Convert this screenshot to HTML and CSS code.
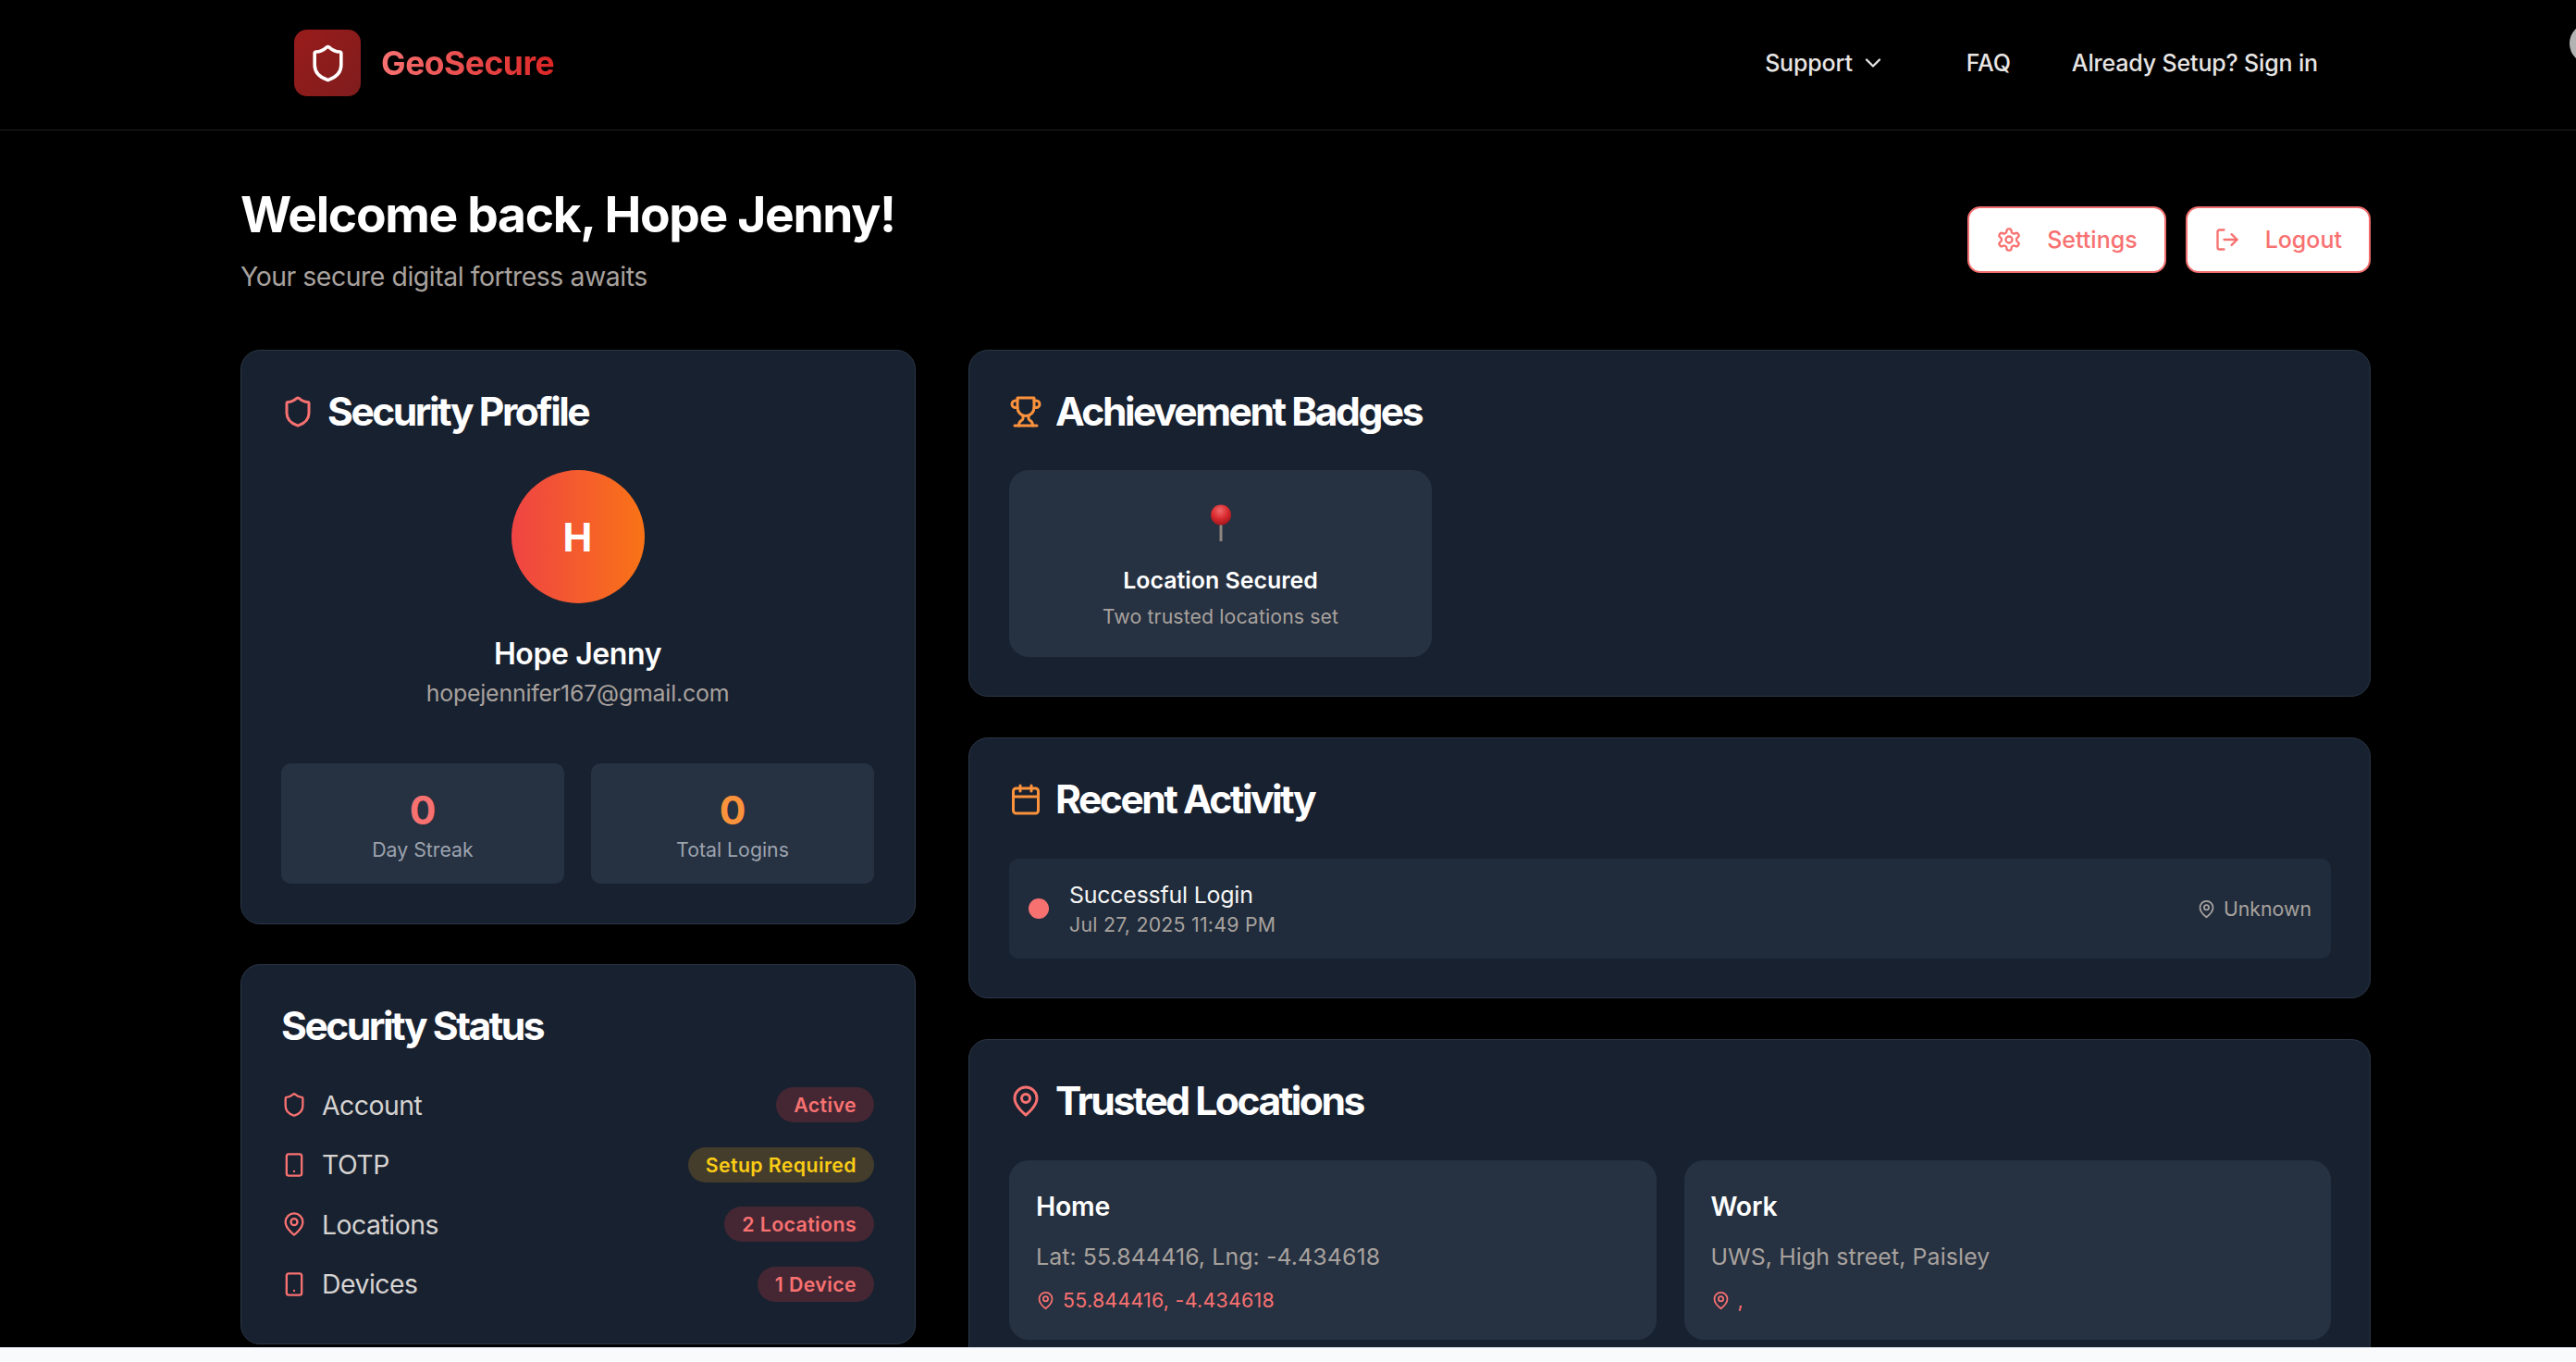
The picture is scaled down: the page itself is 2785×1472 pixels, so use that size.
FILE: index.html
```html
<!doctype html>
<html>
<head>
  <meta charset="utf-8">
  <title>GeoSecure</title>
  <link rel="stylesheet" href="styles.css">
</head>
<body>
  <div class="page">
    <nav class="nav">
      <a class="brand">
        <span class="brand-mark">
          <svg class="icon icon-brand" viewBox="0 0 24 24"><path d="M20 13c0 5-3.5 7.5-7.66 8.95a1 1 0 0 1-.67-.01C7.5 20.5 4 18 4 13V6a1 1 0 0 1 1-1c2 0 4.5-1.2 6.24-2.72a1.17 1.17 0 0 1 1.52 0C14.51 3.81 17 5 19 5a1 1 0 0 1 1 1z"/></svg>
        </span>
        <span class="brand-name">GeoSecure</span>
      </a>
      <div class="nav-links">
        <a class="nav-link nav-support">Support
          <svg class="icon icon-chevron" viewBox="0 0 24 24"><path d="m6 9 6 6 6-6"/></svg>
        </a>
        <a class="nav-link">FAQ</a>
        <a class="nav-link">Already Setup? Sign in</a>
      </div>
    </nav>
    <span class="corner-dot"></span>

    <main class="main">
      <header class="welcome">
        <div>
          <h1>Welcome back, Hope Jenny!</h1>
          <p class="welcome-sub">Your secure digital fortress awaits</p>
        </div>
        <div class="welcome-actions">
          <a class="btn">
            <svg class="icon icon-md" viewBox="0 0 24 24"><path d="M12.22 2h-.44a2 2 0 0 0-2 2v.18a2 2 0 0 1-1 1.73l-.43.25a2 2 0 0 1-2 0l-.15-.08a2 2 0 0 0-2.73.73l-.22.38a2 2 0 0 0 .73 2.73l.15.1a2 2 0 0 1 1 1.72v.51a2 2 0 0 1-1 1.74l-.15.09a2 2 0 0 0-.73 2.73l.22.38a2 2 0 0 0 2.73.73l.15-.08a2 2 0 0 1 2 0l.43.25a2 2 0 0 1 1 1.73V20a2 2 0 0 0 2 2h.44a2 2 0 0 0 2-2v-.18a2 2 0 0 1 1-1.73l.43-.25a2 2 0 0 1 2 0l.15.08a2 2 0 0 0 2.73-.73l.22-.39a2 2 0 0 0-.73-2.73l-.15-.08a2 2 0 0 1-1-1.74v-.5a2 2 0 0 1 1-1.74l.15-.09a2 2 0 0 0 .73-2.73l-.22-.38a2 2 0 0 0-2.73-.73l-.15.08a2 2 0 0 1-2 0l-.43-.25a2 2 0 0 1-1-1.73V4a2 2 0 0 0-2-2z"/><circle cx="12" cy="12" r="3"/></svg>
            Settings
          </a>
          <a class="btn">
            <svg class="icon icon-md" viewBox="0 0 24 24"><path d="M9 21H5a2 2 0 0 1-2-2V5a2 2 0 0 1 2-2h4"/><path d="m16 17 5-5-5-5"/><path d="M21 12H9"/></svg>
            Logout
          </a>
        </div>
      </header>

      <div class="columns">
        <div class="col col-left">
          <section class="card">
            <h2 class="card-title">
              <svg class="icon icon-lg red" viewBox="0 0 24 24"><path d="M20 13c0 5-3.5 7.5-7.66 8.95a1 1 0 0 1-.67-.01C7.5 20.5 4 18 4 13V6a1 1 0 0 1 1-1c2 0 4.5-1.2 6.24-2.72a1.17 1.17 0 0 1 1.52 0C14.51 3.81 17 5 19 5a1 1 0 0 1 1 1z"/></svg>
              Security Profile
            </h2>
            <div class="profile">
              <div class="avatar">H</div>
              <div class="profile-name">Hope Jenny</div>
              <div class="profile-email">hopejennifer167@gmail.com</div>
            </div>
            <div class="stats">
              <div class="stat">
                <div class="stat-value red">0</div>
                <div class="stat-label">Day Streak</div>
              </div>
              <div class="stat">
                <div class="stat-value orange">0</div>
                <div class="stat-label">Total Logins</div>
              </div>
            </div>
          </section>

          <section class="card card-status">
            <h2 class="card-title">Security Status</h2>
            <ul class="status-list">
              <li class="status-row">
                <span class="status-name">
                  <svg class="icon icon-md red" viewBox="0 0 24 24"><path d="M20 13c0 5-3.5 7.5-7.66 8.95a1 1 0 0 1-.67-.01C7.5 20.5 4 18 4 13V6a1 1 0 0 1 1-1c2 0 4.5-1.2 6.24-2.72a1.17 1.17 0 0 1 1.52 0C14.51 3.81 17 5 19 5a1 1 0 0 1 1 1z"/></svg>
                  Account
                </span>
                <span class="pill">Active</span>
              </li>
              <li class="status-row">
                <span class="status-name">
                  <svg class="icon icon-md red" viewBox="0 0 24 24"><rect x="5" y="2" width="14" height="20" rx="2"/><path d="M12 18h.01"/></svg>
                  TOTP
                </span>
                <span class="pill pill-warn">Setup Required</span>
              </li>
              <li class="status-row">
                <span class="status-name">
                  <svg class="icon icon-md red" viewBox="0 0 24 24"><path d="M20 10c0 6-8 12-8 12s-8-6-8-12a8 8 0 0 1 16 0Z"/><circle cx="12" cy="10" r="3"/></svg>
                  Locations
                </span>
                <span class="pill">2 Locations</span>
              </li>
              <li class="status-row">
                <span class="status-name">
                  <svg class="icon icon-md red" viewBox="0 0 24 24"><rect x="5" y="2" width="14" height="20" rx="2"/><path d="M12 18h.01"/></svg>
                  Devices
                </span>
                <span class="pill">1 Device</span>
              </li>
            </ul>
          </section>
        </div>

        <div class="col col-right">
          <section class="card">
            <h2 class="card-title">
              <svg class="icon icon-lg orange" viewBox="0 0 24 24"><path d="M6 9H4.5a2.5 2.5 0 0 1 0-5H6"/><path d="M18 9h1.5a2.5 2.5 0 0 0 0-5H18"/><path d="M4 22h16"/><path d="M10 14.66V17c0 .55-.47.98-.97 1.21C7.85 18.75 7 20.24 7 22"/><path d="M14 14.66V17c0 .55.47.98.97 1.21C16.15 18.75 17 20.24 17 22"/><path d="M18 2H6v7a6 6 0 0 0 12 0V2Z"/></svg>
              Achievement Badges
            </h2>
            <div class="badges">
              <div class="badge">
                <svg class="pin" viewBox="0 0 24 40">
                  <defs>
                    <radialGradient id="pin-head" cx="45%" cy="30%" r="70%">
                      <stop offset="0" stop-color="#f0686a"/>
                      <stop offset="0.55" stop-color="#d92b2f"/>
                      <stop offset="1" stop-color="#a5161c"/>
                    </radialGradient>
                  </defs>
                  <rect x="10.5" y="18" width="3" height="22" fill="#8d8680"/>
                  <circle cx="12" cy="11.5" r="11" fill="url(#pin-head)"/>
                </svg>
                <div class="badge-title">Location Secured</div>
                <div class="badge-sub">Two trusted locations set</div>
              </div>
            </div>
          </section>

          <section class="card">
            <h2 class="card-title">
              <svg class="icon icon-lg orange" viewBox="0 0 24 24"><path d="M8 2v4"/><path d="M16 2v4"/><rect x="3" y="4" width="18" height="18" rx="2"/><path d="M3 10h18"/></svg>
              Recent Activity
            </h2>
            <div class="activity">
              <span class="activity-dot"></span>
              <div class="activity-text">
                <div class="activity-title">Successful Login</div>
                <div class="activity-time">Jul 27, 2025 11:49 PM</div>
              </div>
              <span class="activity-place">
                <svg class="icon icon-sm" viewBox="0 0 24 24"><path d="M20 10c0 6-8 12-8 12s-8-6-8-12a8 8 0 0 1 16 0Z"/><circle cx="12" cy="10" r="3"/></svg>
                Unknown
              </span>
            </div>
          </section>

          <section class="card">
            <h2 class="card-title">
              <svg class="icon icon-lg red" viewBox="0 0 24 24"><path d="M20 10c0 6-8 12-8 12s-8-6-8-12a8 8 0 0 1 16 0Z"/><circle cx="12" cy="10" r="3"/></svg>
              Trusted Locations
            </h2>
            <div class="locations">
              <div class="location">
                <div class="location-name">Home</div>
                <div class="location-addr">Lat: 55.844416, Lng: -4.434618</div>
                <div class="location-coords">
                  <svg class="icon icon-sm" viewBox="0 0 24 24"><path d="M20 10c0 6-8 12-8 12s-8-6-8-12a8 8 0 0 1 16 0Z"/><circle cx="12" cy="10" r="3"/></svg>
                  55.844416, -4.434618
                </div>
              </div>
              <div class="location">
                <div class="location-name">Work</div>
                <div class="location-addr">UWS, High street, Paisley</div>
                <div class="location-coords">
                  <svg class="icon icon-sm" viewBox="0 0 24 24"><path d="M20 10c0 6-8 12-8 12s-8-6-8-12a8 8 0 0 1 16 0Z"/><circle cx="12" cy="10" r="3"/></svg>
                  ,
                </div>
              </div>
            </div>
          </section>
        </div>
      </div>
    </main>
  </div>
  <div class="page-end"></div>
</body>
</html>
```

FILE: styles.css
```css
html, body {
  width: 100%;
  height: 100%;
  margin: 0;
  padding: 0;
  overflow: hidden;
  background-color: #f8fafc;
  font-family: Inter, "Liberation Sans", sans-serif;
}
h1, h2, p, ul {
  margin: 0;
  padding: 0;
}
ul {
  list-style: none;
}

.page {
  position: relative;
  height: 1456px;
  overflow: hidden;
  background-color: #000;
  color: #fff;
}
.page-end {
  height: 16px;
  border-top: 1px solid #e2e8f0;
  box-sizing: border-box;
}

/* icons */
.icon {
  flex: none;
  fill: none;
  stroke: currentColor;
  stroke-width: 2;
  stroke-linecap: round;
  stroke-linejoin: round;
}
.icon-sm { width: 21px; height: 21px; }
.icon-md { width: 28px; height: 28px; }
.icon-lg { width: 36px; height: 36px; }
.icon-brand { width: 43px; height: 43px; color: #fff; }
.icon-chevron { width: 28px; height: 28px; }
.red { color: #f87171; }
.orange { color: #fb923c; }

/* nav */
.nav {
  display: flex;
  align-items: center;
  justify-content: space-between;
  height: 141px;
  box-sizing: border-box;
  padding: 0 279px 4px 318px;
  border-bottom: 1px solid #1f1f1f;
}
.brand {
  display: flex;
  align-items: center;
  gap: 22px;
}
.brand-mark {
  display: flex;
  align-items: center;
  justify-content: center;
  width: 72px;
  height: 72px;
  border-radius: 14px;
  background: linear-gradient(135deg, #991b1b, #7f1d1d);
}
.brand-name {
  font-size: 35.5px;
  font-weight: 700;
  letter-spacing: -0.5px;
  background: linear-gradient(90deg, #f87171, #dc2626);
  -webkit-background-clip: text;
  background-clip: text;
  color: transparent;
}
.nav-links {
  display: flex;
  align-items: center;
  gap: 66px;
}
.nav-link {
  display: flex;
  align-items: center;
  gap: 8px;
  font-size: 25px;
  font-weight: 500;
  letter-spacing: -0.16px;
  color: #e7e5e4;
}
.nav-support {
  margin-right: 21px;
}
.corner-dot {
  position: absolute;
  top: 25px;
  left: 2778px;
  width: 44px;
  height: 44px;
  border-radius: 50%;
  background-color: #b3b3b3;
}

/* main */
.main {
  width: 2303px;
  padding: 57px 0 0 260px;
}
.welcome {
  display: flex;
  align-items: center;
  justify-content: space-between;
  margin-bottom: 58px;
}
.welcome h1 {
  padding-top: 2px;
  font-size: 53.3px;
  line-height: 64px;
  font-weight: 700;
  letter-spacing: -1.33px;
  color: #fff;
}
.welcome-sub {
  margin-top: 13px;
  font-size: 28.4px;
  line-height: 43px;
  letter-spacing: -0.45px;
  color: #a8a29e;
}
.welcome-actions {
  display: flex;
  gap: 21px;
}
.btn {
  display: flex;
  align-items: center;
  gap: 27px;
  height: 72px;
  box-sizing: border-box;
  padding: 0 29px;
  border: 2px solid #f26d6d;
  border-radius: 14px;
  background-color: #fff;
  font-size: 25px;
  font-weight: 500;
  color: #f87171;
}

.columns {
  display: grid;
  grid-template-columns: 730px 1516px;
  gap: 57px;
  align-items: start;
}
.col {
  display: flex;
  flex-direction: column;
}
.col-left { gap: 43px; }
.col-right { gap: 44px; }

.card {
  padding: 42px 42px 42px 43px;
  border: 1px solid #2b3646;
  border-radius: 21px;
  background-color: #182130;
}
.col-left .card {
  padding-right: 44px;
  padding-bottom: 43px;
}
.col-left .card-status {
  padding-bottom: 45px;
}
.card-title {
  display: flex;
  align-items: center;
  gap: 14px;
  margin-bottom: 39px;
  font-size: 42.6px;
  line-height: 48px;
  font-weight: 700;
  letter-spacing: -2.5px;
  color: #fff;
}

/* profile */
.profile {
  display: flex;
  flex-direction: column;
  align-items: center;
}
.avatar {
  display: flex;
  align-items: center;
  justify-content: center;
  width: 144px;
  height: 144px;
  border-radius: 50%;
  background: linear-gradient(90deg, #ef4444, #f97316);
  font-size: 42.6px;
  font-weight: 700;
  color: #fff;
}
.profile-name {
  margin-top: 33px;
  font-size: 32px;
  line-height: 43px;
  font-weight: 600;
  letter-spacing: -0.4px;
}
.profile-email {
  margin-top: 2px;
  font-size: 24.9px;
  line-height: 38px;
  letter-spacing: -0.2px;
  color: #a8a29e;
}
.stats {
  display: grid;
  grid-template-columns: 1fr 1fr;
  gap: 29px;
  margin-top: 57px;
}
.stat {
  display: flex;
  flex-direction: column;
  align-items: center;
  justify-content: center;
  height: 130px;
  box-sizing: border-box;
  padding-top: 4px;
  border-radius: 10px;
  background-color: #263141;
}
.stat-value {
  font-size: 42.6px;
  line-height: 50px;
  font-weight: 700;
}
.stat-label {
  margin-top: 2px;
  font-size: 21.3px;
  line-height: 30px;
  color: #9ca3af;
}

/* status */
.card-status .card-title {
  margin-bottom: 42px;
}
.status-list {
  display: flex;
  flex-direction: column;
  gap: 26.67px;
}
.status-row {
  display: flex;
  align-items: center;
  justify-content: space-between;
  height: 38px;
}
.status-name {
  display: flex;
  align-items: center;
  gap: 16px;
  font-size: 28.4px;
  letter-spacing: -0.5px;
  color: #d6d3d1;
}
.pill {
  display: flex;
  align-items: center;
  height: 38px;
  padding: 0 19px;
  border-radius: 19px;
  background-color: #452733;
  font-size: 21.3px;
  font-weight: 600;
  letter-spacing: 0.4px;
  color: #f87171;
}
.pill-warn {
  background-color: #453d2b;
  color: #facc15;
}

/* badges */
.badges {
  display: grid;
  grid-template-columns: 457px;
}
.badge {
  display: flex;
  flex-direction: column;
  align-items: center;
  height: 202px;
  box-sizing: border-box;
  padding-top: 37px;
  border-radius: 21px;
  background-color: #263141;
}
.pin {
  width: 24px;
  height: 40px;
}
.badge-title {
  margin-top: 24px;
  font-size: 24.9px;
  line-height: 36px;
  font-weight: 600;
}
.badge-sub {
  margin-top: 6px;
  font-size: 21.3px;
  line-height: 30px;
  letter-spacing: 0.1px;
  color: #a8a29e;
}

/* activity */
.activity {
  display: flex;
  align-items: center;
  height: 108px;
  margin-top: 40px;
  padding: 0 21px;
  border-radius: 10px;
  background-color: #202c3c;
}
.activity-dot {
  flex: none;
  width: 22px;
  height: 22px;
  border-radius: 50%;
  background-color: #f87171;
}
.activity-text {
  flex: 1;
  margin-left: 22px;
}
.activity-title {
  font-size: 24.9px;
  line-height: 34px;
  letter-spacing: -0.2px;
  color: #f5f5f4;
}
.activity-time {
  font-size: 21.3px;
  line-height: 30px;
  letter-spacing: 0.25px;
  color: #a8a29e;
}
.activity-place {
  display: flex;
  align-items: center;
  gap: 8px;
  font-size: 21.3px;
  color: #a8a29e;
}

/* locations */
.locations {
  display: grid;
  grid-template-columns: 1fr 1fr;
  gap: 30px;
  margin-top: 40px;
}
.location {
  height: 194px;
  box-sizing: border-box;
  padding: 30px 29px;
  border-radius: 21px;
  background-color: #263141;
}
.location-name {
  font-size: 28.4px;
  line-height: 40px;
  font-weight: 600;
  letter-spacing: -0.2px;
}
.location-addr {
  margin-top: 16px;
  font-size: 24.9px;
  line-height: 36px;
  letter-spacing: 0.1px;
  color: #a8a29e;
}
.location-coords {
  display: flex;
  align-items: center;
  gap: 8px;
  margin-top: 14px;
  font-size: 21.3px;
  line-height: 30px;
  letter-spacing: 0.3px;
  color: #f87171;
}
```
